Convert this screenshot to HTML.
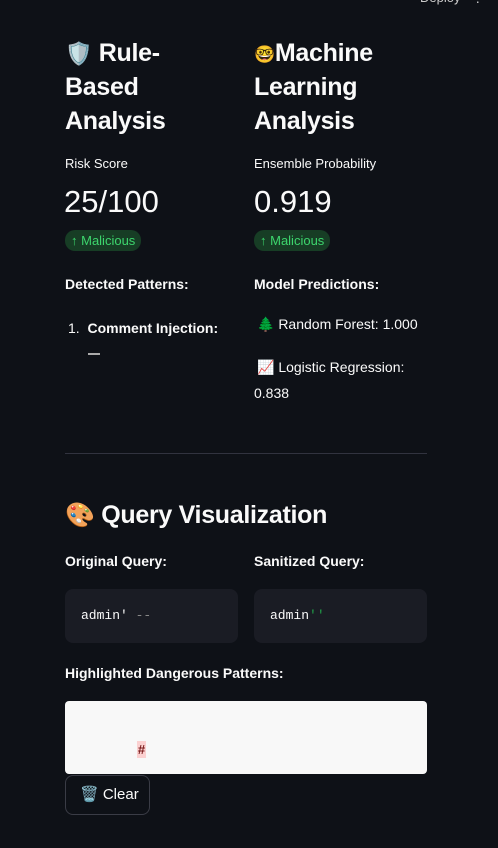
<!DOCTYPE html>
<html><head><meta charset="utf-8"><style>
*{margin:0;padding:0;box-sizing:border-box}
body{width:498px;height:848px;background:#0e1117;color:#fafafa;font-family:"Liberation Sans",sans-serif;position:relative;overflow:hidden}
.a{position:absolute;white-space:nowrap}
h2{font-size:25px;font-weight:bold;line-height:34px;letter-spacing:-0.3px}
h2 span{line-height:1;display:inline-block;vertical-align:middle}
.lbl{font-size:13px}
.val{font-size:31px}
.badge{background:#173d25;color:#3dd56d;font-size:13px;border-radius:10px;padding:2px 6px;height:21px;line-height:17px}
.b{font-size:14px;font-weight:bold}
.t{font-size:14px}
.code{background:#1a1c24;border-radius:8px;font-family:"Liberation Mono",monospace;font-size:13px;padding:0 16px;line-height:54px}
</style></head><body>
<div class="a" style="left:420px;top:-10px;font-size:13px;color:#ccc">Deploy &nbsp; ⋮</div>
<div class="a" style="left:65px;top:36px"><h2><span style="font-size:22px">🛡️</span> Rule-<br>Based<br>Analysis</h2></div>
<div class="a" style="left:254px;top:36px"><h2><span style="font-size:17px">🤓</span>Machine<br>Learning<br>Analysis</h2></div>
<div class="a lbl" style="left:65px;top:156px">Risk Score</div>
<div class="a lbl" style="left:254px;top:156px">Ensemble Probability</div>
<div class="a val" style="left:64px;top:184px">25/100</div>
<div class="a val" style="left:254px;top:184px">0.919</div>
<div class="a badge" style="left:65px;top:230px">↑ Malicious</div>
<div class="a badge" style="left:254px;top:230px">↑ Malicious</div>
<div class="a b" style="left:65px;top:276px">Detected Patterns:</div>
<div class="a b" style="left:254px;top:276px">Model Predictions:</div>
<div class="a t" style="left:68px;top:320px">1.&nbsp; <b>Comment Injection:</b></div>
<div class="a" style="left:88px;top:353px;width:12px;height:2px;background:#aaa"></div>
<div class="a t" style="left:257px;top:316px">🌲 Random Forest: 1.000</div>
<div class="a t" style="left:257px;top:359px">📈 Logistic Regression:</div>
<div class="a t" style="left:254px;top:385px">0.838</div>
<div class="a" style="left:65px;top:453px;width:362px;height:1px;background:#31333f"></div>
<div class="a" style="left:65px;top:498px"><h2><span style="font-size:24px">🎨</span> Query Visualization</h2></div>
<div class="a b" style="left:65px;top:553px">Original Query:</div>
<div class="a b" style="left:254px;top:553px">Sanitized Query:</div>
<div class="a code" style="left:65px;top:589px;width:173px;height:54px">admin' <span style="color:#888">--</span></div>
<div class="a code" style="left:254px;top:589px;width:173px;height:54px">admin<span style="color:#21a049">''</span></div>
<div class="a b" style="left:65px;top:665px">Highlighted Dangerous Patterns:</div>
<div class="a" style="left:65px;top:701px;width:362px;height:73px;background:#f8f8f8;border-radius:4px"></div>
<div class="a" style="left:137px;top:741px;width:9px;height:17px;background:#fbd0d0;color:#7a1c1c;font-size:13px;font-weight:bold;text-align:center;line-height:17px">#</div>
<div class="a" style="left:65px;top:775px;width:85px;height:40px;border:1px solid #3a3c46;border-radius:8px;font-size:15px;line-height:38px;padding-left:14px">🗑️ Clear</div>
</body></html>
